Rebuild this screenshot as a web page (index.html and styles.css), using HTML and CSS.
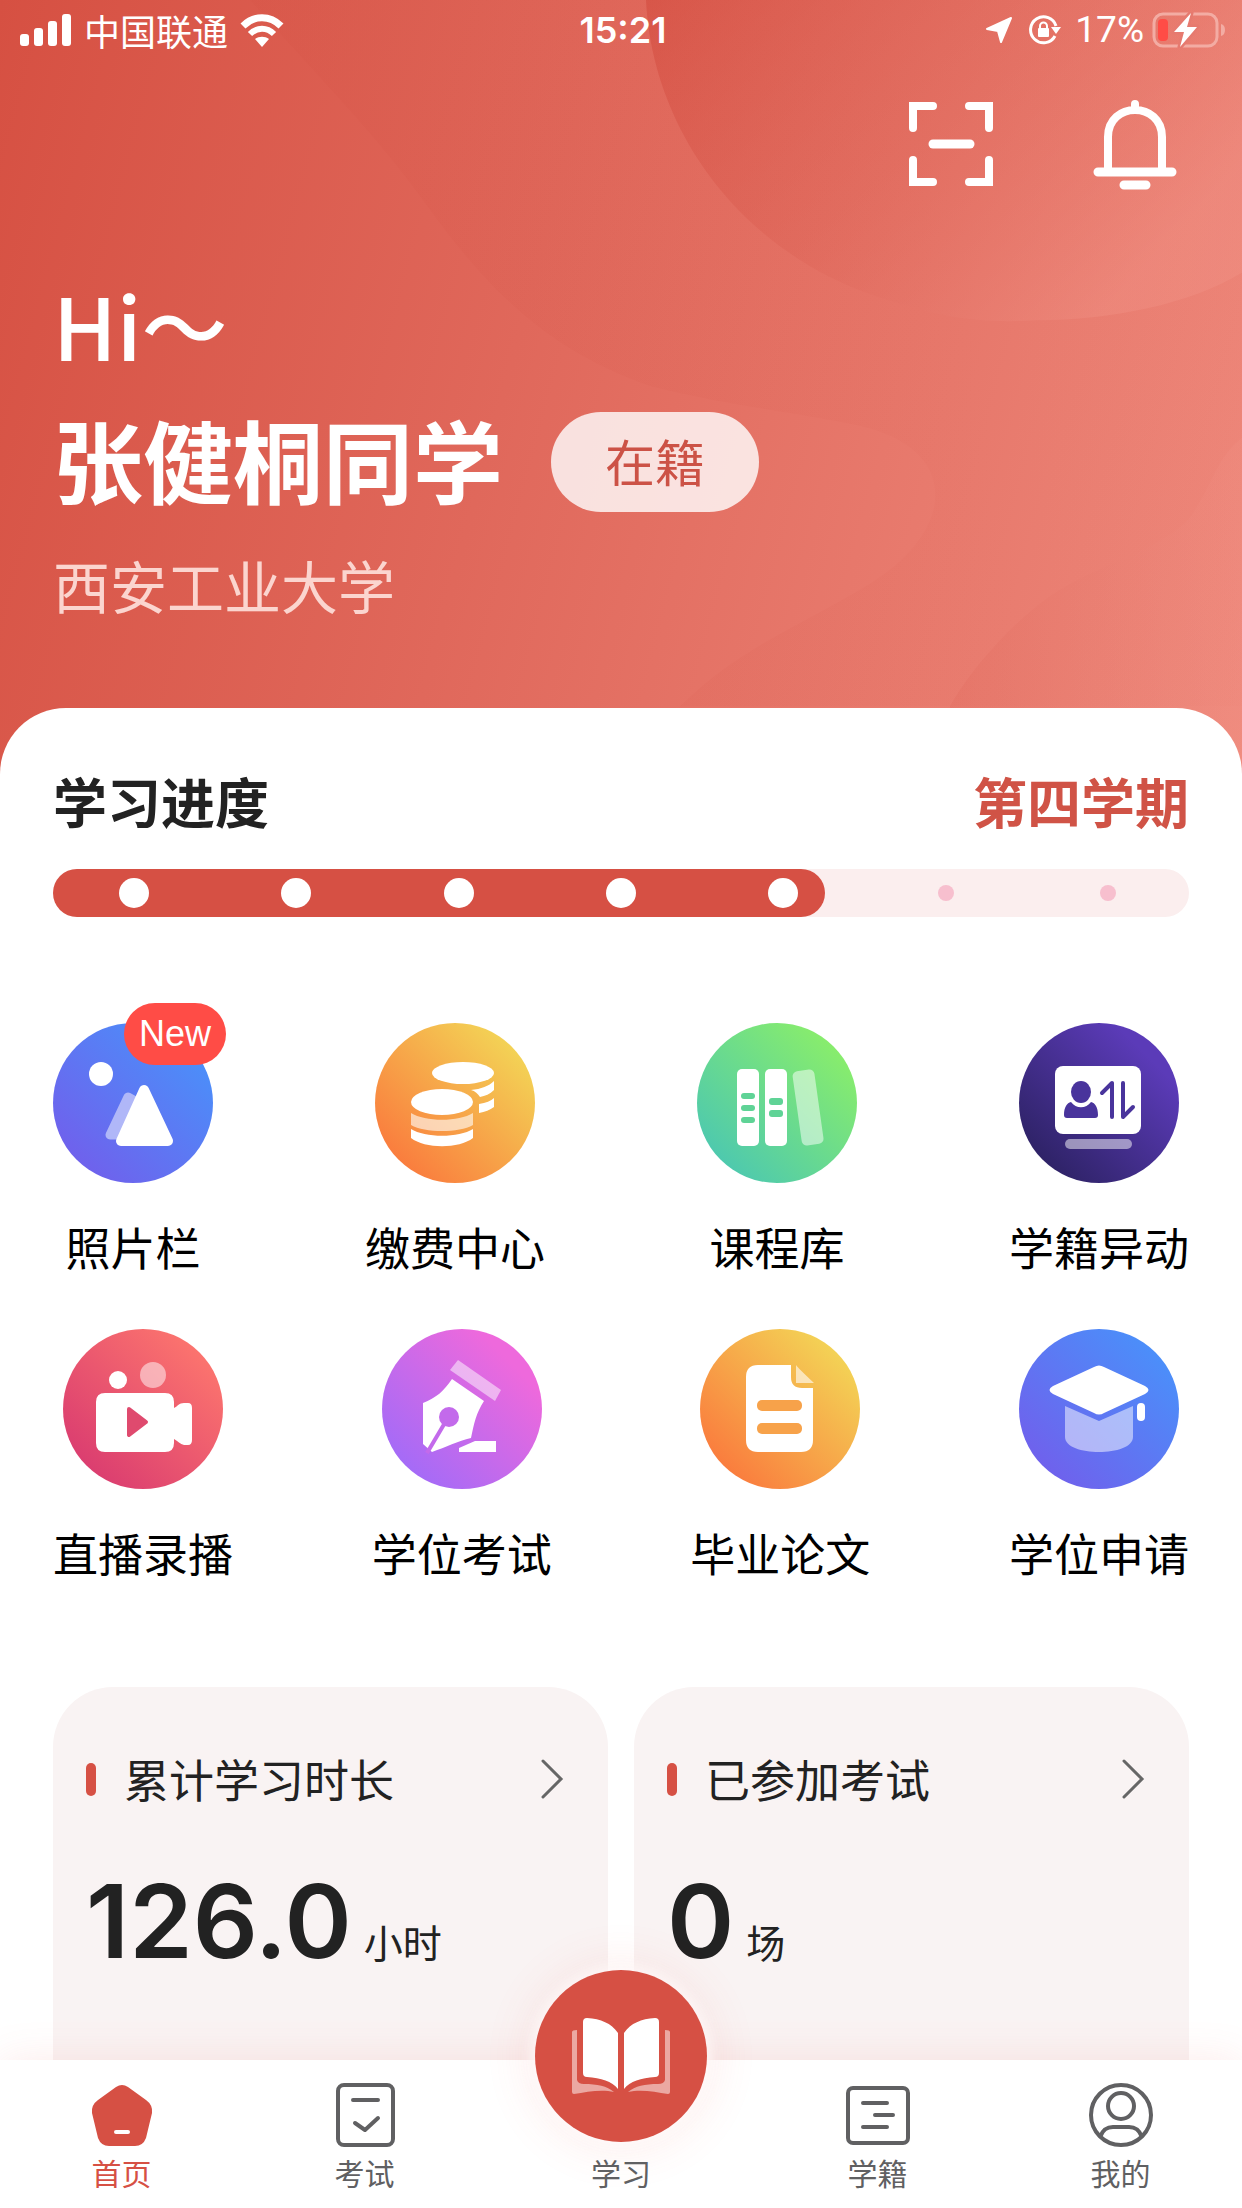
FILE: index.html
```html
<!DOCTYPE html>
<html lang="zh-CN">
  <head>
    <meta charset="UTF-8" />
    <meta name="viewport" content="width=device-width, initial-scale=1.0" />
    <title>首页</title>
    <link rel="stylesheet" href="styles.css">
  </head>
  <body>
    <div class="app">
      <main class="content">
        <header class="hero">
          <svg class="hero-bg" viewBox="0 0 1242 780" preserveAspectRatio="none" aria-hidden="true">
            <defs>
              <linearGradient id="wave1" x1="0" y1="0" x2="1" y2="0.5">
                <stop offset="0" stop-color="#d04538" stop-opacity="0.5" />
                <stop offset="0.5" stop-color="#d8584b" stop-opacity="0.25" />
                <stop offset="1" stop-color="#f29488" stop-opacity="0.35" />
              </linearGradient>
              <linearGradient id="wave2" x1="0" y1="0" x2="1" y2="0">
                <stop offset="0" stop-color="#cf4a3c" stop-opacity="0.1" />
                <stop offset="1" stop-color="#cf4a3c" stop-opacity="0.02" />
              </linearGradient>
              <linearGradient id="wave3" x1="0" y1="0" x2="1" y2="0">
                <stop offset="0" stop-color="#dd6457" stop-opacity="0.22" />
                <stop offset="1" stop-color="#f29488" stop-opacity="0.2" />
              </linearGradient>
            </defs>
            <path fill="url(#wave2)" d="M250 0C330 90 380 140 428 208C480 280 540 350 650 388C730 408 780 412 850 426C960 446 960 530 871 586C800 630 740 650 680 710H1242V0Z" />
            <path fill="url(#wave1)" d="M646 0C652 130 740 250 871 296C940 320 980 325 1037 322C1110 322 1190 306 1242 274V0Z" />
            <path fill="url(#wave3)" d="M950 710C966 680 1000 640 1030 615C1080 570 1150 560 1188 523C1212 490 1216 460 1242 440V780H950Z" />
          </svg>

          <div class="status-bar">
            <div class="status-left">
              <svg width="52" height="32" viewBox="0 0 52 32" fill="#fff" aria-hidden="true">
                <rect x="0" y="20" width="9" height="12" rx="3" />
                <rect x="14" y="14" width="9" height="18" rx="3" />
                <rect x="28" y="7" width="9" height="25" rx="3" />
                <rect x="42" y="0" width="9" height="32" rx="3" />
              </svg>
              <span>中国联通</span>
              <svg width="44" height="33" viewBox="0 0 44 33" aria-hidden="true">
                <path d="M3 12C14 1 30 1 41 12" fill="none" stroke="#fff" stroke-width="7" />
                <path d="M10 20C17 13 27 13 34 20" fill="none" stroke="#fff" stroke-width="6" />
                <path d="M15 25C19 22 25 22 29 25L22 33Z" fill="#fff" />
              </svg>
            </div>
            <time class="clock">15:21</time>
            <div class="status-right">
              <svg width="28" height="28" viewBox="0 0 28 28" aria-hidden="true">
                <path d="M26 2L16 26L13 15L2 13Z" fill="#fff" stroke="#fff" stroke-width="2" stroke-linejoin="round" />
              </svg>
              <svg class="lock-icon" width="32" height="30" viewBox="0 0 32 30" aria-hidden="true">
                <path d="M26 21A13 13 0 1 1 27 11" fill="none" stroke="#fff" stroke-width="3" />
                <path d="M22 12H32L27 19Z" fill="#fff" />
                <rect x="9" y="13" width="11" height="9" rx="1" fill="#fff" />
                <path d="M11 13V11A3.500 3.500 0 0 1 18 11V13" fill="none" stroke="#fff" stroke-width="2" />
              </svg>
              <span>17%</span>
              <svg width="74" height="36" viewBox="0 0 74 36" aria-hidden="true">
                <rect x="2" y="2" width="63" height="32" rx="9" fill="none" stroke="#f3aca3" stroke-width="3" />
                <path d="M69 12Q73 13 73 18T69 24Z" fill="#f3aca3" />
                <rect x="6" y="7" width="10" height="22" rx="4" fill="#ff4c46" />
                <path d="M39 1L22 20H32L28 35L45 15H35Z" fill="#fff" stroke="#e67a6f" stroke-width="5" stroke-linejoin="round" />
                <path d="M39 1L22 20H32L28 35L45 15H35Z" fill="#fff" />
              </svg>
            </div>
          </div>

          <div class="hero-actions">
            <button class="icon-btn" type="button" aria-label="扫一扫">
              <svg width="88" height="88" viewBox="0 0 88 88" fill="none" stroke="#fff" stroke-width="8" stroke-linecap="round" aria-hidden="true">
                <path d="M6 28V6H26M62 6H82V28M6 60V82H26M62 82H82V60" />
                <path d="M26 44H63" stroke-width="9" />
              </svg>
            </button>
            <button class="icon-btn" type="button" aria-label="消息通知">
              <svg width="88" height="92" viewBox="0 0 88 92" fill="none" stroke="#fff" stroke-width="8" stroke-linecap="round" aria-hidden="true">
                <path d="M17 72V39C17 3 71 3 71 39V72M44 6V11" />
                <path d="M7 74H81M33 87H55" stroke-width="9" />
              </svg>
            </button>
          </div>

          <div class="profile">
            <p class="hello">Hi～</p>
            <div class="name-row">
              <h1 class="name">张健桐同学</h1>
              <span class="tag">在籍</span>
            </div>
            <p class="school">西安工业大学</p>
          </div>
        </header>

        <div class="sheet">
          <section class="progress">
            <div class="progress-head">
              <h2>学习进度</h2>
              <span class="term">第四学期</span>
            </div>
            <div class="track">
              <div class="track-fill" style="width: 68%"></div>
              <ol class="steps">
                <li class="done"></li>
                <li class="done"></li>
                <li class="done"></li>
                <li class="done"></li>
                <li class="done"></li>
                <li></li>
                <li></li>
              </ol>
            </div>
          </section>

          <nav class="menu" aria-label="功能">
            <div class="menu-row">
              <a class="menu-item" href="#">
                <span class="menu-icon blue">
                  <svg viewBox="0 0 160 160" fill="#fff" aria-hidden="true">
                    <circle cx="48" cy="51" r="12" />
                    <path d="M75 74L57 112H80L86 80Z" fill="#b0b7f8" stroke="#b0b7f8" stroke-width="9" stroke-linejoin="round" />
                    <path d="M91 67L68 118H115Z" stroke="#fff" stroke-width="10" stroke-linejoin="round" />
                  </svg>
                  <span class="badge">New</span>
                </span>
                <span>照片栏</span>
              </a>
              <a class="menu-item" href="#">
                <span class="menu-icon orange">
                  <svg viewBox="0 0 160 160" fill="#fff" aria-hidden="true">
                    <ellipse cx="88" cy="50" rx="31" ry="11" />
                    <path d="M96 67C106 66 114 63 119 58V67C115 71 110 73 105 74C103 71 100 68 96 67Z" />
                    <path d="M104 81C111 80 116 78 119 75V84C115 87 110 89 104 90Z" />
                    <ellipse cx="67" cy="79" rx="31" ry="13" />
                    <path d="M36 90C50 99 84 99 98 90V102C84 110 50 110 36 102Z" opacity="0.6" />
                    <path d="M36 106C50 115 84 115 98 106V115C84 126 50 126 36 115Z" />
                  </svg>
                </span>
                <span>缴费中心</span>
              </a>
              <a class="menu-item" href="#">
                <span class="menu-icon green">
                  <svg viewBox="0 0 160 160" fill="#fff" aria-hidden="true">
                    <rect x="40" y="46" width="22" height="77" rx="5" />
                    <rect x="68" y="46" width="22" height="77" rx="5" />
                    <rect x="100" y="47" width="22" height="75" rx="5" transform="rotate(-8 111 84)" opacity="0.5" />
                    <g fill="#5fd396">
                      <rect x="44" y="70" width="14" height="6" rx="3" />
                      <rect x="44" y="82" width="14" height="6" rx="3" />
                      <rect x="44" y="94" width="14" height="6" rx="3" />
                      <rect x="72" y="75" width="14" height="7" rx="3" />
                      <rect x="72" y="87" width="14" height="7" rx="3" />
                    </g>
                  </svg>
                </span>
                <span>课程库</span>
              </a>
              <a class="menu-item" href="#">
                <span class="menu-icon purple">
                  <svg viewBox="0 0 160 160" fill="#fff" aria-hidden="true">
                    <rect x="36" y="43" width="86" height="68" rx="8" />
                    <rect x="46" y="116" width="67" height="10" rx="5" opacity="0.5" />
                    <path d="M45 92C45 84 48 80 52 79C57 86 67 86 72 79C76 80 79 84 79 92Q79 95 76 95H48Q45 95 45 92Z" fill="#49349c" />
                    <ellipse cx="62" cy="69" rx="10" ry="11" fill="#49349c" />
                    <path d="M83 70L93 60V94M104 60V94L114 84" fill="none" stroke="#49349c" stroke-width="4" stroke-linecap="round" stroke-linejoin="round" />
                  </svg>
                </span>
                <span>学籍异动</span>
              </a>
            </div>
            <div class="menu-row">
              <a class="menu-item" href="#">
                <span class="menu-icon red">
                  <svg viewBox="0 0 160 160" fill="#fff" aria-hidden="true">
                    <circle cx="55" cy="51" r="9" />
                    <circle cx="90" cy="46" r="13" opacity="0.5" />
                    <path d="M42 64H102Q111 64 111 73V79C115 77 116 74 121 74H125Q129 74 129 79V111Q129 116 125 116H121C117 115 115 112 111 110V114Q111 123 102 123H42Q33 123 33 114V73Q33 64 42 64Z" />
                    <path d="M66 80L83 93L66 106Z" fill="#df4a6e" stroke="#df4a6e" stroke-width="4" stroke-linejoin="round" />
                  </svg>
                </span>
                <span>直播录播</span>
              </a>
              <a class="menu-item" href="#">
                <span class="menu-icon pink">
                  <svg viewBox="0 0 160 160" fill="#fff" aria-hidden="true">
                    <path d="M76 31L119 61L113 72L68 41Z" opacity="0.5" />
                    <path d="M70 50L102 72C94 84 92 95 89 109C76 112 64 118 50 123L41 115V74C54 69 62 62 70 50Z" />
                    <path d="M77 119L93 112H114V123H77Z" />
                    <circle cx="67" cy="88" r="10" fill="#c36aeb" />
                    <path d="M64 92L45 124" stroke="#c36aeb" stroke-width="4" />
                  </svg>
                </span>
                <span>学位考试</span>
              </a>
              <a class="menu-item" href="#">
                <span class="menu-icon orange">
                  <svg viewBox="0 0 160 160" fill="#fff" aria-hidden="true">
                    <path d="M58 36H91V48Q91 59 102 59H113V111Q113 123 101 123H58Q46 123 46 111V48Q46 36 58 36Z" />
                    <path d="M96 36Q98 39 114 54H96Z" opacity="0.6" />
                    <rect x="57" y="71" width="45" height="11" rx="5" fill="#f7a24a" />
                    <rect x="57" y="94" width="45" height="11" rx="5" fill="#f7a24a" />
                  </svg>
                </span>
                <span>毕业论文</span>
              </a>
              <a class="menu-item" href="#">
                <span class="menu-icon blue">
                  <svg viewBox="0 0 160 160" fill="#fff" aria-hidden="true">
                    <path d="M46 77L80 92L114 77V108C114 128 46 128 46 108Z" opacity="0.5" />
                    <path d="M75 38Q80 35 85 38L126 57Q133 61 126 65L85 84Q80 87 75 84L34 65Q27 61 34 57Z" />
                    <rect x="118" y="74" width="8" height="18" rx="4" />
                  </svg>
                </span>
                <span>学位申请</span>
              </a>
            </div>
          </nav>

          <section class="stats">
            <a class="card" href="#">
              <div class="card-head">
                <h3>累计学习时长</h3>
                <svg width="24" height="40" viewBox="0 0 24 40" fill="none" stroke="#666" stroke-width="3" stroke-linecap="round" aria-hidden="true">
                  <path d="M3 2L21 20L3 38" />
                </svg>
              </div>
              <p class="value"><strong>126.0</strong><span>小时</span></p>
            </a>
            <a class="card" href="#">
              <div class="card-head">
                <h3>已参加考试</h3>
                <svg width="24" height="40" viewBox="0 0 24 40" fill="none" stroke="#666" stroke-width="3" stroke-linecap="round" aria-hidden="true">
                  <path d="M3 2L21 20L3 38" />
                </svg>
              </div>
              <p class="value"><strong>0</strong><span>场</span></p>
            </a>
          </section>
        </div>
      </main>

      <nav class="tabbar" aria-label="主导航">
        <a class="tab active" href="#">
          <svg width="64" height="64" viewBox="0 0 64 64" aria-hidden="true">
            <path d="M26 4Q32 0 38 4L56 17Q63 22 62 30L56 55Q53 63 45 63H19Q11 63 8 55L2 30Q1 22 8 17Z" fill="#d65044" />
            <path d="M26 49H38" stroke="#fff" stroke-width="4" stroke-linecap="round" />
          </svg>
          <span>首页</span>
        </a>
        <a class="tab" href="#">
          <svg width="64" height="64" viewBox="0 0 64 64" fill="none" stroke="#606062" stroke-width="4" stroke-linecap="round" stroke-linejoin="round" aria-hidden="true">
            <rect x="5" y="2" width="55" height="60" rx="6" />
            <path d="M20 17H45M22 40L32 47L45 35" />
          </svg>
          <span>考试</span>
        </a>
        <a class="tab tab-study" href="#">
          <span class="study-btn">
            <svg viewBox="0 0 172 172" fill="#fff" aria-hidden="true">
              <path d="M37 62Q37 60 42 60V110Q43 114 49 114C62 114 72 116 79 122C66 119 52 122 39 124Q37 124 37 122Z" opacity="0.5" />
              <path d="M135 62Q135 60 130 60V110Q129 114 123 114C110 114 100 116 93 122C106 119 120 122 133 124Q135 124 135 122Z" opacity="0.5" />
              <path d="M48 52Q48 48 52 48C66 49 76 53 83 63V119C77 111 66 108 52 107Q48 107 48 103Z" />
              <path d="M124 52Q124 48 120 48C106 49 96 53 89 63V119C95 111 106 108 120 107Q124 107 124 103Z" />
            </svg>
          </span>
          <span>学习</span>
        </a>
        <a class="tab" href="#">
          <svg width="64" height="64" viewBox="0 0 64 64" fill="none" stroke="#606062" stroke-width="4" stroke-linecap="round" aria-hidden="true">
            <rect x="2" y="5" width="60" height="55" rx="5" />
            <path d="M17 20H41M29 32H47M17 44H41" />
          </svg>
          <span>学籍</span>
        </a>
        <a class="tab" href="#">
          <svg width="64" height="64" viewBox="0 0 64 64" fill="none" stroke="#606062" stroke-width="4" aria-hidden="true">
            <circle cx="32" cy="32" r="30" />
            <circle cx="32" cy="23" r="13" />
            <path d="M11 54C14 46 18 44 24 44H40C46 44 50 46 53 54" />
          </svg>
          <span>我的</span>
        </a>
      </nav>
    </div>
  </body>
</html>
```
FILE: styles.css
```css
* {
  box-sizing: border-box;
}

body {
  margin: 0;
  font-family: 'Noto Sans CJK SC', 'Noto Sans', sans-serif;
  color: #222;
  background: #fff;
}

h1,
h2,
h3,
p,
ol {
  margin: 0;
  padding: 0;
}

a {
  color: inherit;
  text-decoration: none;
}

svg {
  display: block;
}

.app {
  display: flex;
  flex-direction: column;
  height: 100vh;
}

.content {
  flex: 1;
  min-height: 0;
  overflow-y: auto;
  scrollbar-width: none;
}

/* header */
.hero {
  position: relative;
  padding-bottom: 152px;
  background: linear-gradient(105deg, #d65042 0%, #e0685b 42%, #ef8a7d 100%);
  color: #fff;
}

.hero-bg {
  position: absolute;
  top: 0;
  left: 0;
  width: 100%;
  height: 100%;
}

.status-bar,
.hero-actions,
.profile {
  position: relative;
}

.status-bar {
  display: grid;
  grid-template-columns: 1fr auto 1fr;
  align-items: center;
  height: 60px;
  padding: 0 16px 0 20px;
  font-size: 36px;
  line-height: 60px;
}

.status-left,
.status-right {
  display: flex;
  align-items: center;
  gap: 12px;
}

.status-right {
  justify-content: flex-end;
  gap: 8px;
  font-family: Roboto, sans-serif;
  font-size: 37px;
}

.lock-icon {
  margin: 0 6px 0 8px;
}

.clock {
  font-family: Inter, sans-serif;
  font-weight: 600;
  font-size: 36px;
}

.hero-actions {
  display: flex;
  justify-content: flex-end;
  align-items: center;
  gap: 96px;
  padding: 38px 63px 0 0;
}

.icon-btn {
  padding: 0;
  border: none;
  background: none;
  cursor: pointer;
}

.profile {
  padding: 72px 53px 0;
}

.hello {
  font-size: 86px;
  font-weight: 500;
  line-height: 124px;
}

.name-row {
  display: flex;
  align-items: center;
  gap: 48px;
  margin-top: 14px;
}

.name {
  padding-bottom: 8px;
  font-size: 90px;
  font-weight: 700;
  line-height: 116px;
}

.tag {
  padding: 0 54px 4px;
  border-radius: 50px;
  background: rgba(255, 255, 255, 0.8);
  color: #cc5246;
  font-size: 50px;
  line-height: 96px;
}

.school {
  margin-top: 20px;
  color: #fbd5cf;
  font-size: 57px;
  line-height: 80px;
}

/* white sheet */
.sheet {
  position: relative;
  margin-top: -68px;
  padding: 57px 53px 40px;
  border-radius: 66px 66px 0 0;
  background: #fff;
}

.progress-head {
  display: flex;
  justify-content: space-between;
  font-size: 54px;
  line-height: 72px;
}

.progress-head h2 {
  font-size: 54px;
  font-weight: 700;
}

.term {
  color: #d05346;
  font-weight: 700;
}

.track {
  position: relative;
  height: 48px;
  margin-top: 32px;
  border-radius: 24px;
  background: #fbeeee;
}

.track-fill {
  height: 100%;
  border-radius: 24px;
  background: #d65044;
}

.steps {
  position: absolute;
  inset: 0;
  display: flex;
  list-style: none;
}

.steps li {
  flex: 1;
  display: flex;
  align-items: center;
  justify-content: center;
}

.steps li::before {
  content: '';
  width: 16px;
  height: 16px;
  border-radius: 50%;
  background: #f7bfce;
}

.steps .done::before {
  width: 30px;
  height: 30px;
  background: #fff;
}

/* feature menu */
.menu {
  display: flex;
  flex-direction: column;
  gap: 50px;
  margin-top: 106px;
}

.menu-row {
  display: flex;
  justify-content: space-between;
}

.menu-item {
  display: flex;
  flex-direction: column;
  align-items: center;
  gap: 32px;
  color: #000;
  font-size: 45px;
  line-height: 64px;
}

.menu-icon {
  position: relative;
  width: 160px;
  height: 160px;
  border-radius: 50%;
}

.blue {
  background: linear-gradient(45deg, #7060ec 12%, #4a90fa 88%);
}

.orange {
  background: linear-gradient(45deg, #fa7a3d 12%, #f3d556 88%);
}

.green {
  background: linear-gradient(45deg, #4cc8b0 12%, #8aee6a 88%);
}

.purple {
  background: linear-gradient(45deg, #2d2264 12%, #5b3bb8 80%);
}

.red {
  background: linear-gradient(45deg, #da3c70 12%, #fb736e 85%);
}

.pink {
  background: linear-gradient(45deg, #a26bf8 12%, #ee69dc 80%);
}

.badge {
  position: absolute;
  top: -20px;
  left: 71px;
  padding: 0 15px;
  border-radius: 31px;
  background: #ff4c46;
  color: #fff;
  font-family: 'Liberation Sans', Arial, sans-serif;
  font-size: 36px;
  line-height: 62px;
}

/* stat cards */
.stats {
  display: grid;
  grid-template-columns: 1fr 1fr;
  gap: 26px;
  margin-top: 102px;
}

.card {
  padding: 60px 44px 120px 33px;
  border-radius: 60px;
  background: #f9f3f3;
}

.card-head {
  display: flex;
  align-items: center;
  justify-content: space-between;
}

.card-head h3 {
  display: flex;
  align-items: center;
  gap: 28px;
  font-size: 45px;
  font-weight: 400;
  line-height: 64px;
}

.card-head h3::before {
  content: '';
  width: 10px;
  height: 33px;
  border-radius: 5px;
  background: #d65044;
}

.value {
  display: flex;
  align-items: baseline;
  gap: 12px;
  margin-top: 46px;
  font-size: 39px;
  line-height: 128px;
}

.value strong {
  font-family: Inter, sans-serif;
  font-size: 102px;
  font-weight: 600;
}

/* bottom tabs */
.tabbar {
  position: relative;
  display: grid;
  grid-template-columns: 1fr 1fr 270px 1fr 1fr;
  align-items: end;
  padding: 22px 0 18px;
  background: #fff;
  box-shadow: 0 0 40px rgba(240, 90, 80, 0.12);
}

.tab {
  display: flex;
  flex-direction: column;
  align-items: center;
  gap: 7px;
  color: #606062;
  font-size: 30px;
  line-height: 36px;
}

.tab.active {
  color: #d65044;
}

/* the round button rises above the bar */
.tab-study {
  gap: 12px;
  margin-top: -112px;
}

.study-btn {
  width: 172px;
  height: 172px;
  border-radius: 50%;
  background: #d65044;
  box-shadow: 0 0 12px 6px rgba(255, 250, 250, 0.7), 0 0 40px 14px rgba(240, 90, 80, 0.08);
}
```
